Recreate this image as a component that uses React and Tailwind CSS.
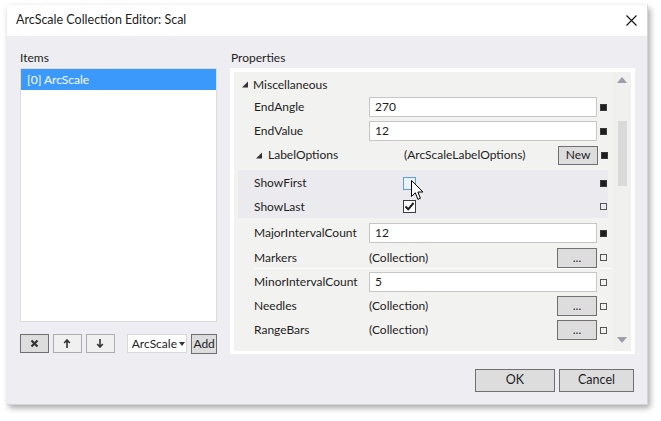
const font = { fontFamily: 'Lato, "Noto Sans", sans-serif' };

const Marker = ({ filled }) => (
    <span
        className={
            filled
                ? "ml-[3px] shrink-0 w-[7px] h-[7px] bg-[#1e1e1e] border border-[#3a3a3a]"
                : "ml-[3px] shrink-0 w-[7px] h-[7px] border border-[#555]"
        }
    />
);

const TextValue = ({ value }) => (
    <div className="w-full h-[20px] bg-white border border-[#c6c6c6] pl-[5px] flex items-center">
        {value}
    </div>
);

const DotsButton = ({ label = "..." }) => (
    <div className="ml-auto shrink-0 w-[40px] h-[20px] bg-[#dddddd] border border-[#707070] flex items-center justify-center leading-none">
        {label}
    </div>
);

const Row = ({ name, children, filled, h = "h-[24px]", indent = "pl-[20px]", nameW = "w-[115px]", valueW = "w-[228px]" }) => (
    <div className={`${h} flex items-center ${indent}`}>
        <span className={`${nameW} shrink-0 whitespace-nowrap`}>{name}</span>
        <div className={`${valueW} shrink-0 flex items-center`}>{children}</div>
        <Marker filled={filled} />
    </div>
);

const Tri = () => (
    <svg width="7" height="7" viewBox="0 0 7 7" className="shrink-0">
        <path d="M6 0.5 L6 6.5 L0 6.5 Z" fill="#333" />
    </svg>
);

const Cursor = () => (
    <svg width="13" height="21" viewBox="0 0 13 21" className="absolute left-[411px] top-[180px]">
        <path d="M0.5 0.5 L0.5 16.5 L4.3 12.8 L6.9 19.3 L9.4 18.3 L6.9 12 L12 12 Z" fill="white" stroke="black" strokeWidth="1" strokeLinejoin="round" />
    </svg>
);

const PropertyGrid = () => (
    <div className="w-[405px] h-[286px] bg-white pt-[4px] pl-[4px] pr-[4px] pb-[3px] flex">
        <div className="w-[379px] h-full bg-[#f2f2f0] flex flex-col">
            <div className="mt-[2px] h-[21px] flex items-center pl-[8px] gap-[4px]">
                <Tri />
                <span>Miscellaneous</span>
            </div>
            <Row name="EndAngle" filled>
                <TextValue value="270" />
            </Row>
            <Row name="EndValue" filled>
                <TextValue value="12" />
            </Row>
            <div className="h-[24px] flex items-center pl-[22px]">
                <Tri />
                <span className="ml-[5px] w-[136px] shrink-0">LabelOptions</span>
                <div className="w-[194px] shrink-0 flex items-center">
                    <span>(ArcScaleLabelOptions)</span>
                    <div className="ml-auto w-[40px] h-[19px] bg-[#dddddd] border border-[#707070] flex items-center justify-center">New</div>
                </div>
                <Marker filled />
            </div>
            <div className="mt-[3px] ml-[4px] w-[370px] bg-[#ebeaee] pt-[1px] flex flex-col">
                <Row name="ShowFirst" filled indent="pl-[16px]" nameW="w-[149px]" valueW="w-[194px]">
                    <span className="w-[13px] h-[13px] border border-[#5b9cf2] bg-[#eaf2fd]" />
                </Row>
                <Row name="ShowLast" indent="pl-[16px]" nameW="w-[149px]" valueW="w-[194px]" h="h-[23px]">
                    <span className="w-[13px] h-[13px] border border-[#3c3c3c] bg-white flex items-center justify-center">
                        <svg width="11" height="11" viewBox="0 0 11 11">
                            <path d="M1.5 5.5 L4.2 8.3 L9.5 2" fill="none" stroke="#1e1e1e" strokeWidth="2" />
                        </svg>
                    </span>
                </Row>
            </div>
            <div className="mt-[3px]">
                <Row name="MajorIntervalCount" filled>
                    <TextValue value="12" />
                </Row>
            </div>
            <div className="relative">
                <Row name="Markers" h="h-[25px]">
                    <span>(Collection)</span>
                    <DotsButton />
                </Row>
                <div className="absolute left-[20px] right-0 bottom-[1px] h-px bg-[#fcfcfc]" />
            </div>
            <Row name="MinorIntervalCount">
                <TextValue value="5" />
            </Row>
            <Row name="Needles">
                <span>(Collection)</span>
                <DotsButton />
            </Row>
            <Row name="RangeBars">
                <span>(Collection)</span>
                <DotsButton />
            </Row>
        </div>
        <div className="w-[18px] h-full bg-[#f0f0ef] flex flex-col items-center">
            <svg width="10" height="6" viewBox="0 0 10 6" className="mt-[5px]">
                <path d="M5 0 L10 6 L0 6 Z" fill="#9d9dab" />
            </svg>
            <div className="mt-[38px] w-[9px] h-[65px] bg-[#dadada]" />
            <svg width="10" height="6" viewBox="0 0 10 6" className="mt-auto mb-[8px]">
                <path d="M0 0 L10 0 L5 6 Z" fill="#9d9dab" />
            </svg>
        </div>
    </div>
);

const SmallButton = ({ children, dark }) => (
    <div
        className={
            dark
                ? "w-[29px] h-[19px] bg-[#dddddd] border border-[#707070] flex items-center justify-center"
                : "w-[29px] h-[19px] bg-[#f0f0f0] border border-[#adadad] flex items-center justify-center"
        }
    >
        {children}
    </div>
);

export default function App() {
    return (
        <div className="w-[661px] h-[421px] bg-white relative text-[12px] text-[#1e1e1e]" style={font}>
            <div className="ml-[7px] pt-[5px]">
                <div className="w-[641px] h-[400px] flex flex-col shadow-[2px_3px_6px_rgba(0,0,0,0.35)] border border-[#d4d4d4] border-t-0 border-l-0">
                    <div className="h-[31px] bg-white flex items-center pl-[9px] pr-[10px]">
                        <span className="text-[12.5px]">ArcScale Collection Editor: Scal</span>
                        <svg width="11" height="11" viewBox="0 0 11 11" className="ml-auto">
                            <path d="M0.5 0.5 L10.5 10.5 M10.5 0.5 L0.5 10.5" stroke="#111" strokeWidth="1.1" />
                        </svg>
                    </div>
                    <div className="flex-1 bg-[#eeedf2] px-[13px] pt-[13px] pb-[12px] flex flex-col">
                        <div className="flex gap-[13px]">
                            <div className="w-[197px] flex flex-col">
                                <div className="h-[19px] leading-[17px]">Items</div>
                                <div className="h-[254px] bg-white border border-[#dcdcdc]">
                                    <div className="h-[21px] bg-[#3c99fc] text-white pl-[6px] flex items-center">[0] ArcScale</div>
                                </div>
                                <div className="mt-[12px] h-[20px] flex items-start">
                                    <SmallButton dark>
                                        <svg width="9" height="9" viewBox="0 0 9 9">
                                            <path d="M1.5 1.5 L7.5 7.5 M7.5 1.5 L1.5 7.5" stroke="#333" strokeWidth="2.2" />
                                        </svg>
                                    </SmallButton>
                                    <div className="ml-[4px]">
                                        <SmallButton>
                                            <svg width="8" height="9" viewBox="0 0 8 9">
                                                <path d="M4 1 L4 9 M1.2 4 L4 1 L6.8 4" fill="none" stroke="#333" strokeWidth="1.6" />
                                            </svg>
                                        </SmallButton>
                                    </div>
                                    <div className="ml-[4px]">
                                        <SmallButton>
                                            <svg width="8" height="9" viewBox="0 0 8 9">
                                                <path d="M4 0 L4 8 M1.2 5 L4 8 L6.8 5" fill="none" stroke="#333" strokeWidth="1.6" />
                                            </svg>
                                        </SmallButton>
                                    </div>
                                    <div className="ml-[12px] w-[61px] h-[19px] bg-white border border-[#d9d9d9] flex items-center pl-[4px]">
                                        <span>ArcScale</span>
                                        <svg width="6" height="4" viewBox="0 0 6 4" className="ml-[2px]">
                                            <path d="M0 0 L6 0 L3 4 Z" fill="#333" />
                                        </svg>
                                    </div>
                                    <div className="ml-[4px] w-[26px] h-[20px] bg-[#dddddd] border border-[#707070] flex items-center justify-center">Add</div>
                                </div>
                            </div>
                            <div className="w-[405px] flex flex-col">
                                <div className="h-[19px] leading-[17px] pl-[1px]">Properties</div>
                                <PropertyGrid />
                            </div>
                        </div>
                        <div className="mt-auto flex justify-end gap-[4px]">
                            <div className="w-[80px] h-[23px] bg-[#dddddd] border border-[#707070] flex items-center justify-center text-[12.5px]">OK</div>
                            <div className="w-[75px] h-[23px] bg-[#dddddd] border border-[#707070] flex items-center justify-center text-[12.5px]">Cancel</div>
                        </div>
                    </div>
                </div>
            </div>
            <Cursor />
        </div>
    );
}
